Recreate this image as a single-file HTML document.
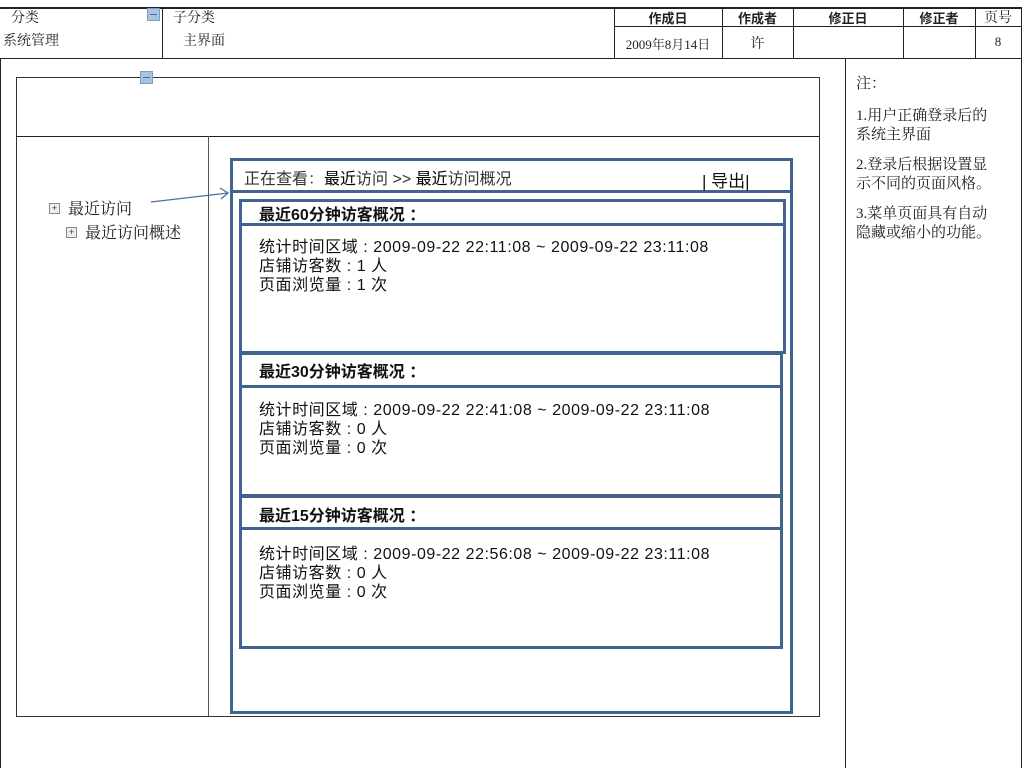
<!DOCTYPE html>
<html><head><meta charset="utf-8"><style>
body{margin:0;width:1024px;height:768px;background:#fff;position:relative;overflow:hidden;font-family:"Liberation Serif","Noto Serif CJK SC",serif;color:#222}
.a{position:absolute}
.hl{position:absolute;height:0;border-top:1px solid #222}
.vl{position:absolute;width:0;border-left:1px solid #222}
.t{position:absolute;font-size:13px;white-space:nowrap}
.s{font-family:"Liberation Sans","Noto Sans CJK SC",sans-serif}
.bx{position:absolute;border:3px solid #41638f;box-sizing:border-box}
.bt{position:absolute;font-family:"Liberation Sans","Noto Sans CJK SC",sans-serif;font-size:16px;font-weight:bold;color:#111;white-space:nowrap}
.bb{position:absolute;font-family:"Liberation Sans","Noto Sans CJK SC",sans-serif;font-size:16px;line-height:19px;color:#111;white-space:nowrap;letter-spacing:0.55px}
.ico{position:absolute;width:9px;height:9px;border:1px solid #888;background:#eee;font-size:9px;line-height:9px;text-align:center;color:#333;font-family:"Liberation Sans",sans-serif}
.mi{position:absolute;width:11px;height:11px;background:#a9c4e0;border:1px solid #7d9cc0}
.mi:after{content:"";position:absolute;left:2px;top:5px;width:7px;height:1px;background:#4a6a90}
</style></head><body>
<div class="hl" style="left:0;top:7px;width:1022px;border-top-width:2px"></div>
<div class="hl" style="left:614px;top:26px;width:408px"></div>
<div class="hl" style="left:0;top:58px;width:1022px"></div>
<div class="vl" style="left:162px;top:7px;height:51px"></div>
<div class="vl" style="left:614px;top:7px;height:51px"></div>
<div class="vl" style="left:722px;top:7px;height:51px"></div>
<div class="vl" style="left:793px;top:7px;height:51px"></div>
<div class="vl" style="left:903px;top:7px;height:51px"></div>
<div class="vl" style="left:975px;top:7px;height:51px"></div>
<div class="vl" style="left:1021px;top:7px;height:761px"></div>
<div class="vl" style="left:0;top:58px;height:710px"></div>
<div class="t" style="left:11px;top:7px;font-size:14px">分类</div>
<div class="mi" style="left:147px;top:8px"></div>
<div class="t" style="left:3px;top:30px;font-size:14px">系统管理</div>
<div class="t" style="left:173px;top:7px;font-size:14px">子分类</div>
<div class="t" style="left:183px;top:30px;font-size:14px">主界面</div>
<div class="t s" style="left:614px;width:108px;text-align:center;top:8px;font-weight:bold">作成日</div>
<div class="t s" style="left:722px;width:71px;text-align:center;top:8px;font-weight:bold">作成者</div>
<div class="t s" style="left:793px;width:110px;text-align:center;top:8px;font-weight:bold">修正日</div>
<div class="t s" style="left:903px;width:72px;text-align:center;top:8px;font-weight:bold">修正者</div>
<div class="t" style="left:975px;width:46px;text-align:center;top:7px;font-size:14px">页号</div>
<div class="t" style="left:614px;width:108px;text-align:center;top:34px;font-size:13px">2009年8月14日</div>
<div class="t" style="left:722px;width:71px;text-align:center;top:33px;font-size:14px">许</div>
<div class="t" style="left:975px;width:46px;text-align:center;top:34px;font-size:13px">8</div>
<div class="vl" style="left:845px;top:58px;height:710px"></div>
<div class="a" style="left:856px;top:75px;font-size:15px;line-height:19px;width:150px">注：<div style="height:13px"></div>1.用户正确登录后的<br>系统主界面<div style="height:11px"></div>2.登录后根据设置显<br>示不同的页面风格。<div style="height:11px"></div>3.菜单页面具有自动<br>隐藏或缩小的功能。</div>
<div class="a" style="left:16px;top:77px;width:802px;height:638px;border:1px solid #333"></div>
<div class="mi" style="left:140px;top:71px"></div>
<div class="hl" style="left:16px;top:136px;width:803px"></div>
<div class="vl" style="left:208px;top:136px;height:580px;border-left-color:#555"></div>
<div class="ico" style="left:49px;top:203px">+</div>
<div class="t" style="left:68px;top:196px;font-size:16px">最近访问</div>
<div class="ico" style="left:66px;top:227px">+</div>
<div class="t" style="left:85px;top:220px;font-size:16px">最近访问概述</div>
<svg class="a" style="left:150px;top:186px" width="82" height="20"><path d="M1 16 L78 7 M70 2 L78 7 L71 13" stroke="#4a70a8" stroke-width="1.3" fill="none"/></svg>
<div class="bx" style="left:230px;top:158px;width:563px;height:556px"></div>
<div class="a" style="left:230px;top:190px;width:563px;height:3px;background:#41638f"></div>
<div class="t s" style="left:244px;top:165px;font-size:16px;color:#333">正在查看<span style="font-family:'Liberation Serif','Noto Serif CJK SC',serif">：</span><span style="color:#000">最近</span>访问 &gt;&gt; <span style="color:#000">最近</span>访问概况</div>
<div class="t s" style="left:702px;top:167px;font-size:17px;color:#111">| 导出|</div>
<div class="bx" style="left:239px;top:199px;width:547px;height:155px"></div>
<div class="a" style="left:239px;top:223px;width:547px;height:3px;background:#41638f"></div>
<div class="bt" style="left:259px;top:201px">最近60分钟访客概况 ：</div>
<div class="bb" style="left:259px;top:238px">统计时间区域 : 2009-09-22 22:11:08 ~ 2009-09-22 23:11:08<br>店铺访客数 : 1 人<br>页面浏览量 : 1 次</div>
<div class="bx" style="left:239px;top:352px;width:544px;height:145px"></div>
<div class="a" style="left:239px;top:385px;width:544px;height:3px;background:#41638f"></div>
<div class="bt" style="left:259px;top:358px">最近30分钟访客概况 ：</div>
<div class="bb" style="left:259px;top:401px">统计时间区域 : 2009-09-22 22:41:08 ~ 2009-09-22 23:11:08<br>店铺访客数 : 0 人<br>页面浏览量 : 0 次</div>
<div class="bx" style="left:239px;top:495px;width:544px;height:154px"></div>
<div class="a" style="left:239px;top:527px;width:544px;height:3px;background:#41638f"></div>
<div class="bt" style="left:259px;top:502px">最近15分钟访客概况 ：</div>
<div class="bb" style="left:259px;top:545px">统计时间区域 : 2009-09-22 22:56:08 ~ 2009-09-22 23:11:08<br>店铺访客数 : 0 人<br>页面浏览量 : 0 次</div>
</body></html>
